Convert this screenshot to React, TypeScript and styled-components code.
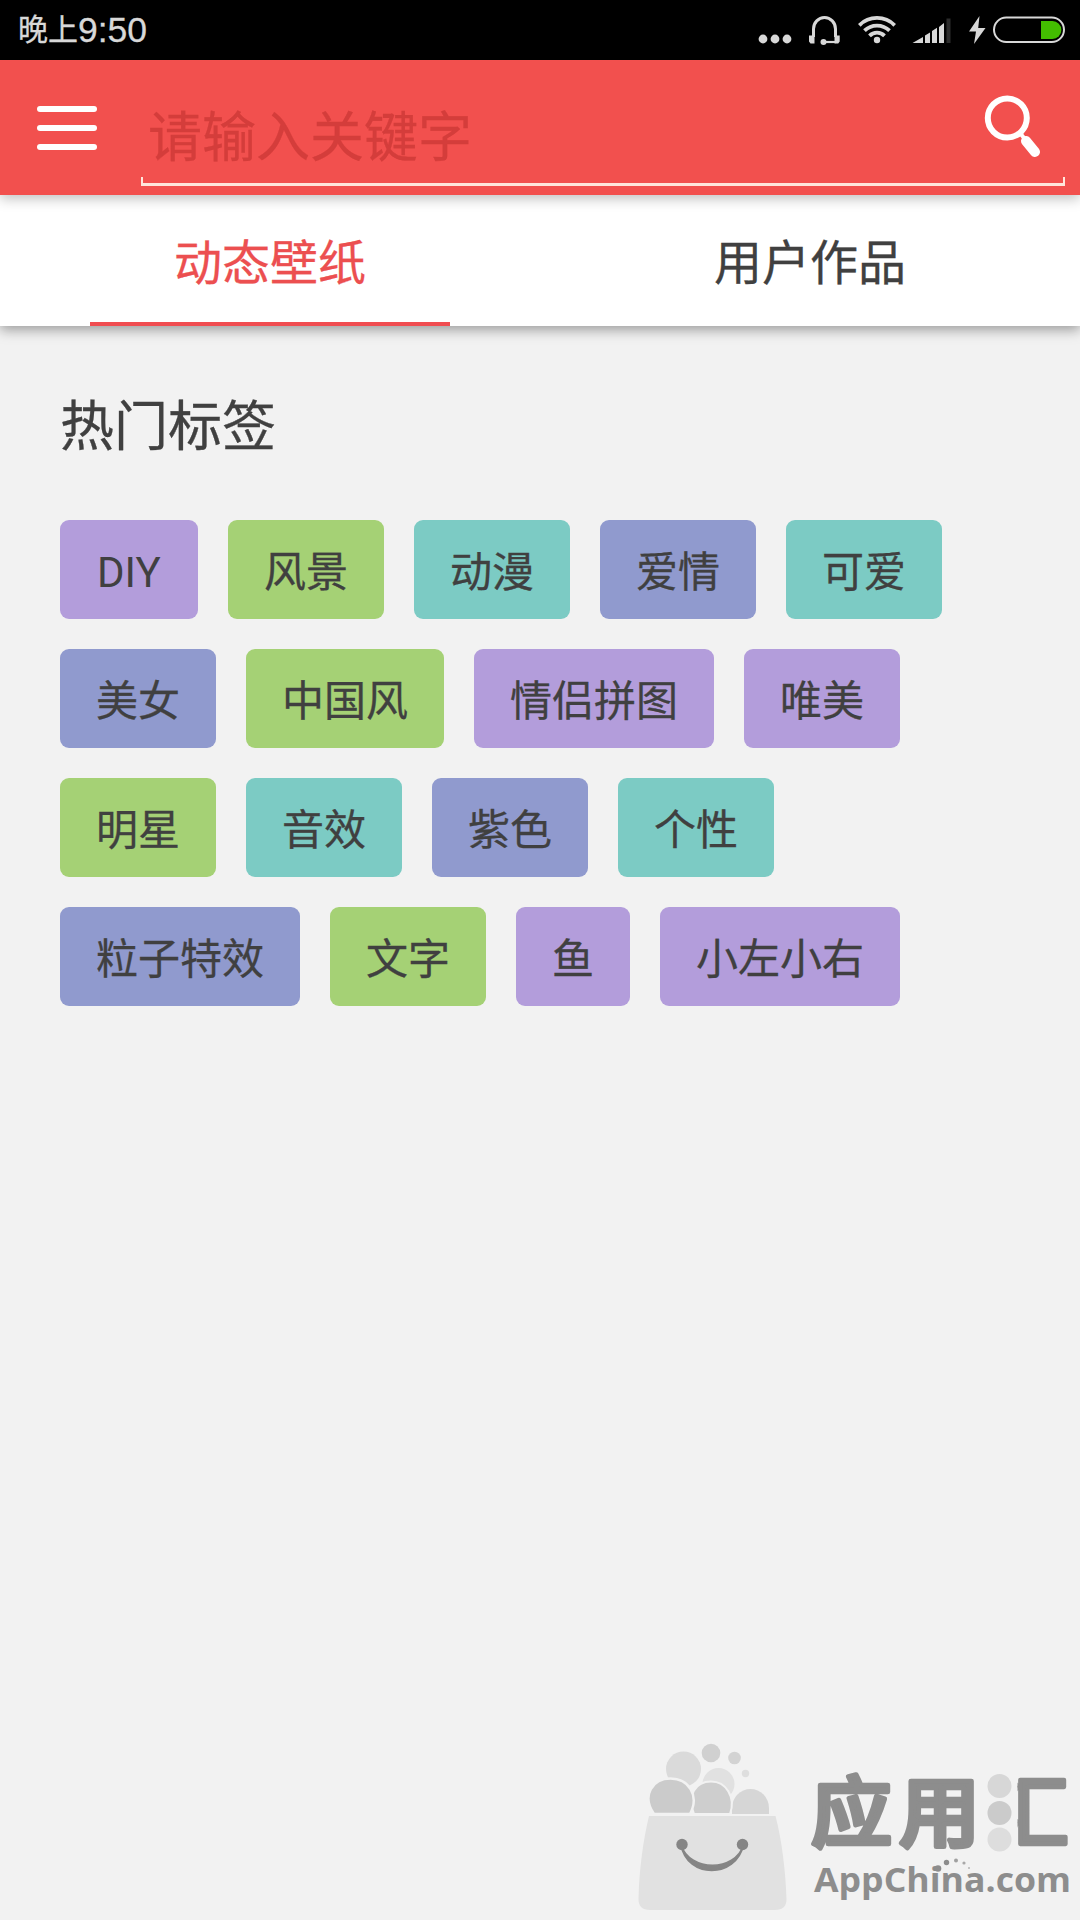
import React from "react";
import styled, { createGlobalStyle } from "styled-components";

const GlobalStyle = createGlobalStyle`
  * { box-sizing: border-box; }
  body {
    margin: 0;
    background: #f2f2f2;
    color: #404040;
    font-family: "Noto Sans CJK SC", sans-serif;
    -webkit-text-stroke: 0.3px currentColor;
  }
`;

const Screen = styled.div`
  display: flex;
  flex-direction: column;
  width: 1080px;
  height: 1920px;
  overflow: hidden;
  background: #f2f2f2;
`;

const StatusBar = styled.div`
  display: flex;
  align-items: center;
  justify-content: space-between;
  height: 60px;
  padding: 0 15px 0 18px;
  background: #000;
  color: #d8d8d8;
`;

const Clock = styled.div`
  display: flex;
  align-items: center;
  font-size: 30px;
`;

const ClockPeriod = styled.span`
  height: 60px;
  line-height: 55px;
`;

const ClockDigits = styled.span`
  height: 60px;
  font-family: "Liberation Sans", sans-serif;
  font-size: 35.5px;
  line-height: 60px;
`;

const StatusIcons = styled.div`
  display: flex;
`;

const StatusSvg = styled.svg<{ $gap?: number }>`
  display: block;
  height: 60px;
  margin-left: ${(p) => p.$gap ?? 0}px;
`;

const Header = styled.header`
  display: flex;
  height: 135px;
  padding-right: 15px;
  background: #f2504e;
  box-shadow: 0 4px 12px rgba(0, 0, 0, 0.24);
  z-index: 2;
`;

const MenuButton = styled.button`
  display: flex;
  flex-direction: column;
  gap: 13px;
  width: 141px;
  padding: 46px 0 0 37px;
  border: 0;
  background: none;
`;

const MenuLine = styled.span`
  width: 60px;
  height: 6px;
  border-radius: 3px;
  background: #fff;
`;

const SearchField = styled.div`
  display: flex;
  flex: 1;
  flex-direction: column;
  height: 126px;
`;

const SearchRow = styled.div`
  display: flex;
  flex: 1;
  justify-content: space-between;
  padding: 0 25px 0 7px;
`;

const Placeholder = styled.span`
  padding-top: 34px;
  color: #d43d3b;
  font-size: 54px;
  line-height: 80px;
`;

const SearchIcon = styled.svg`
  width: 58px;
  height: 64px;
  margin-top: 34px;
`;

const Bracket = styled.div`
  height: 9px;
  border: solid #ffe6dc;
  border-width: 0 2px 3px 2px;
`;

const Tabs = styled.nav`
  display: flex;
  height: 131px;
  background: #fff;
  box-shadow: 0 4px 12px rgba(0, 0, 0, 0.36);
  z-index: 1;
`;

const Tab = styled.div<{ $active?: boolean }>`
  display: flex;
  flex: 1;
  flex-direction: column;
  align-items: center;
  justify-content: space-between;
  height: 131px;
  color: ${(p) => (p.$active ? "#ec4f50" : "#404040")};
  font-size: 48px;
  &::after {
    content: "";
    width: 360px;
    height: 4px;
    background: ${(p) => (p.$active ? "#f04c50" : "transparent")};
  }
`;

const TabLabel = styled.span`
  height: 127px;
  line-height: 129px;
`;

const Content = styled.main`
  display: flex;
  flex: 1;
  flex-direction: column;
  padding: 57px 60px 0;
`;

const Heading = styled.h1`
  margin: 0;
  font-size: 54px;
  font-weight: 400;
  line-height: 80px;
`;

const TagList = styled.div`
  display: flex;
  flex-wrap: wrap;
  gap: 30px;
  margin-top: 57px;
`;

const tones = {
  purple: "#b39ddb",
  green: "#a5d175",
  teal: "#7ccbc4",
  indigo: "#909ace",
};

const TagChip = styled.div<{ $tone: keyof typeof tones }>`
  height: 99px;
  padding: 0 36px;
  border-radius: 9px;
  background: ${(p) => tones[p.$tone]};
  font-size: 42px;
  line-height: 98px;
`;

const LatinLabel = styled.span`
  display: inline-block;
  min-width: 66px;
  padding-left: 1px;
  font-family: Roboto, sans-serif;
  -webkit-text-stroke: 0;
`;

const Footer = styled.footer`
  display: flex;
  justify-content: flex-end;
  height: 190px;
  -webkit-text-stroke: 0;
`;

const tags: { label: string; tone: keyof typeof tones; latin?: boolean }[] = [
  { label: "DIY", tone: "purple", latin: true },
  { label: "风景", tone: "green" },
  { label: "动漫", tone: "teal" },
  { label: "爱情", tone: "indigo" },
  { label: "可爱", tone: "teal" },
  { label: "美女", tone: "indigo" },
  { label: "中国风", tone: "green" },
  { label: "情侣拼图", tone: "purple" },
  { label: "唯美", tone: "purple" },
  { label: "明星", tone: "green" },
  { label: "音效", tone: "teal" },
  { label: "紫色", tone: "indigo" },
  { label: "个性", tone: "teal" },
  { label: "粒子特效", tone: "indigo" },
  { label: "文字", tone: "green" },
  { label: "鱼", tone: "purple" },
  { label: "小左小右", tone: "purple" },
];

const ink = "#d8d8d8";

function SystemIcons() {
  return (
    <StatusIcons>
      <StatusSvg width="34" viewBox="758 0 34 60">
        {[763, 775, 787].map((x) => (
          <circle key={x} cx={x} cy="39" r="4.4" fill={ink} />
        ))}
      </StatusSvg>
      <StatusSvg width="32" viewBox="808 0 32 60" $gap={16}>
        <path d="M813.5 37V29a11 11.5 0 0 1 22 0V37" fill="none" stroke={ink} strokeWidth="3" />
        <path d="M809 35.500h5.500v8h-4l-1.500-2zM834.500 35.500h5.200v6l-1.500 2h-3.700z" fill={ink} />
        <path d="M836 42H823" stroke={ink} strokeWidth="2.200" />
        <circle cx="823.500" cy="42" r="3" fill={ink} />
      </StatusSvg>
      <StatusSvg width="38" viewBox="858 0 38 60" $gap={18}>
        <g fill="none" stroke={ink} strokeWidth="3.800">
          <path d="M859.300 25.300a25 25 0 0 1 35.400 0" />
          <path d="M864.500 30.700a17.800 17.800 0 0 1 25 0" />
          <path d="M869.500 35.800a10.600 10.600 0 0 1 15 0" />
        </g>
        <circle cx="877" cy="40" r="3.200" fill={ink} />
      </StatusSvg>
      <StatusSvg width="39" viewBox="912 0 39 60" $gap={16}>
        <path d="M912.500 43l10.500-6v6zM925 35.500l5-3V43h-5zM932 31l5-3.200V43h-5zM939 27l5-4v20h-5z" fill={ink} />
        <path d="M946.500 18.500h4V43h-4z" fill="#2c2c2c" />
      </StatusSvg>
      <StatusSvg width="17" viewBox="969 0 17 60" $gap={18}>
        <path d="M979.500 16l-10.500 15.500h7L974 44l11.500-16h-7.300z" fill={ink} />
      </StatusSvg>
      <StatusSvg width="72" viewBox="993 0 72 60" $gap={7}>
        <path d="M1041 21h11.500a8.900 9 0 0 1 0 18H1041z" fill="#43bd00" />
        <rect x="994" y="17.500" width="70" height="24.500" rx="12.250" fill="none" stroke={ink} strokeWidth="2" />
      </StatusSvg>
    </StatusIcons>
  );
}

function StoreLogo() {
  return (
    <svg width="460" height="190" viewBox="0 0 460 190" role="img" aria-label="应用汇 AppChina.com">
      <defs>
        <clipPath id="frame-half">
          <rect x="397.500" y="30" width="62" height="100" />
        </clipPath>
      </defs>
      <circle cx="63.500" cy="39" r="17.500" fill="#dadada" />
      <circle cx="91" cy="23" r="9.300" fill="#d0d0d0" />
      <circle cx="114.500" cy="28" r="6.300" fill="#d3d3d3" />
      <circle cx="125.500" cy="43.500" r="3.700" fill="#dedede" />
      <circle cx="98.500" cy="54" r="16" fill="#e1e1e1" />
      <path d="M112 84V78a18.500 19 0 0 1 37 0v6z" fill="#d6d6d6" />
      <path d="M74 84C66 65 76 51.500 91 51.500S116 67 110 84z" fill="#cecece" stroke="#f2f2f2" strokeWidth="2" />
      <path d="M34 84C21 65 33 48.500 50.500 48.500S80 65 70 84z" fill="#cbcbcb" stroke="#f2f2f2" strokeWidth="2.500" />
      <path d="M29 86H155.500C162 111 165.500 141 166.500 169Q166.500 180 155 180H30Q18.500 180 18.500 169C19 141 23 111 29 86Z" fill="#e1e1e1" />
      <circle cx="62" cy="114.500" r="5.700" fill="#858585" />
      <circle cx="122.500" cy="114.500" r="5.700" fill="#858585" />
      <path d="M61 115C67 149 116 149 123.500 115C115 142 70 142 61 115Z" fill="#858585" stroke="#858585" strokeWidth="1.500" />
      <g
        fill="#8d8d8d"
        stroke="#8d8d8d"
        strokeWidth="5"
        strokeLinejoin="round"
        fontFamily="'Noto Sans CJK SC', sans-serif"
        fontSize="81"
        fontWeight="500"
      >
        <text transform="translate(191 111) scale(1 0.950)">应</text>
        <text transform="translate(279 111) scale(1 0.950)">用</text>
        <g clipPath="url(#frame-half)">
          <text transform="translate(375 111) scale(0.910 0.950)" strokeWidth="4.500">汇</text>
        </g>
      </g>
      <circle cx="379.500" cy="56" r="12" fill="#d7d7d7" />
      <circle cx="379.500" cy="83" r="12" fill="#cbcbcb" />
      <circle cx="379.500" cy="109.500" r="12" fill="#dddddd" />
      <text x="194" y="162" fill="#8d8d8d" fontFamily="'Open Sans', sans-serif" fontSize="34" fontWeight="700" textLength="257" lengthAdjust="spacingAndGlyphs">AppChina.com</text>
      <circle cx="318" cy="138.500" r="3.300" fill="#8d8d8d" />
      <circle cx="326.500" cy="132.500" r="2.700" fill="#8d8d8d" />
      <circle cx="336" cy="130.500" r="2" fill="#a0a0a0" />
      <circle cx="344" cy="133" r="1.600" fill="#a8a8a8" />
      <circle cx="349" cy="138" r="1" fill="#b5b5b5" />
    </svg>
  );
}

export default function App() {
  return (
    <>
      <GlobalStyle />
      <Screen>
        <StatusBar>
          <Clock>
            <ClockPeriod>晚上</ClockPeriod>
            <ClockDigits>9:50</ClockDigits>
          </Clock>
          <SystemIcons />
        </StatusBar>
        <Header>
          <MenuButton aria-label="菜单">
            <MenuLine />
            <MenuLine />
            <MenuLine />
          </MenuButton>
          <SearchField>
            <SearchRow>
              <Placeholder>请输入关键字</Placeholder>
              <SearchIcon viewBox="982 94 58 64">
                <circle cx="1007.300" cy="118" r="19.500" fill="none" stroke="#fff" strokeWidth="6" />
                <path d="M1020 133l4 5" stroke="#fff" strokeWidth="4" />
                <path d="M1026 141l9 11" stroke="#fff" strokeWidth="10" strokeLinecap="round" />
              </SearchIcon>
            </SearchRow>
            <Bracket />
          </SearchField>
        </Header>
        <Tabs>
          <Tab $active>
            <TabLabel>动态壁纸</TabLabel>
          </Tab>
          <Tab>
            <TabLabel>用户作品</TabLabel>
          </Tab>
        </Tabs>
        <Content>
          <Heading>热门标签</Heading>
          <TagList>
            {tags.map((tag) => (
              <TagChip key={tag.label} $tone={tag.tone}>
                {tag.latin ? <LatinLabel>{tag.label}</LatinLabel> : tag.label}
              </TagChip>
            ))}
          </TagList>
        </Content>
        <Footer>
          <StoreLogo />
        </Footer>
      </Screen>
    </>
  );
}
